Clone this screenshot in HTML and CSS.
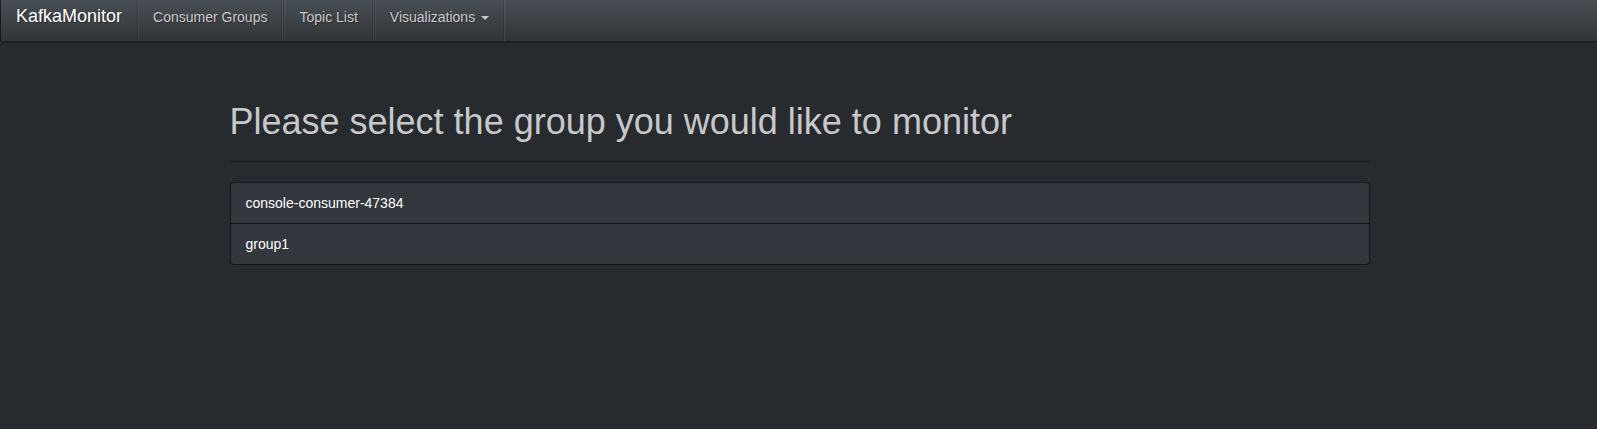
FILE: index.html
```html
<!DOCTYPE html>
<html lang="en">
<head>
<meta charset="utf-8">
<title>KafkaMonitor</title>
<link rel="stylesheet" href="styles.css">
</head>
<body>
<nav class="navbar">
  <a class="brand" href="#">KafkaMonitor</a>
  <ul class="nav">
    <li><a href="#">Consumer Groups</a></li>
    <li><a href="#">Topic List</a></li>
    <li><a href="#">Visualizations <span class="caret"></span></a></li>
  </ul>
</nav>
<main class="container">
  <div class="page-header">
    <h1>Please select the group you would like to monitor</h1>
  </div>
  <div class="list-group">
    <a class="list-item" href="#">console-consumer-47384</a>
    <a class="list-item" href="#">group1</a>
  </div>
</main>
</body>
</html>
```

FILE: styles.css
```css
* { box-sizing: border-box; }
html, body {
  margin: 0;
  padding: 0;
}
body {
  background: #272b30;
  color: #c8c8c8;
  font-family: "Liberation Sans", Arial, sans-serif;
  font-size: 14px;
  line-height: 20px;
}
a { text-decoration: none; }

.navbar {
  display: flex;
  align-items: flex-start;
  height: 42px;
  border-left: 1px solid rgba(0, 0, 0, 0.6);
  border-bottom: 1px solid rgba(0, 0, 0, 0.6);
  background-image: linear-gradient(#484e55, #3a3f44 60%, #313539);
  text-shadow: 1px 1px 1px rgba(0, 0, 0, 0.3);
  box-shadow: 0 3px 0 -2px rgba(0, 0, 0, 0.25);
}
.brand {
  display: block;
  height: 41px;
  padding: 6px 15px 0 15px;
  font-size: 18px;
  line-height: 20px;
  color: #fff;
}
.nav {
  display: flex;
  margin: 0;
  padding: 0;
  list-style: none;
}
.nav a {
  display: block;
  height: 41px;
  padding: 7px 15px 0 15px;
  color: #c8c8c8;
  border-left: 1px solid rgba(0, 0, 0, 0.2);
  border-right: 1px solid rgba(255, 255, 255, 0.08);
  box-shadow: inset 1px 0 0 rgba(255, 255, 255, 0.06), inset -1px 0 0 rgba(0, 0, 0, 0.15);
}
.caret {
  display: inline-block;
  width: 0;
  height: 0;
  margin-left: 2px;
  vertical-align: middle;
  border-top: 4px solid;
  border-left: 4px solid transparent;
  border-right: 4px solid transparent;
}

.container {
  width: 1170px;
  margin: 60px 0 0 calc(50% - 584px);
  padding: 0 15px;
}
.page-header {
  padding-bottom: 9px;
  border-bottom: 1px solid #1c1e22;
  margin-bottom: 20px;
}
.page-header h1 {
  margin: 0 0 10px;
  font-size: 36px;
  font-weight: normal;
  line-height: 1.1;
  color: #c8c8c8;
}
.list-group {
  display: flex;
  flex-direction: column;
}
.list-item {
  display: block;
  padding: 10px 15px;
  margin-bottom: -1px;
  background: #32383e;
  border: 1px solid rgba(0, 0, 0, 0.6);
  color: #fff;
}
.list-item:first-child { border-radius: 4px 4px 0 0; }
.list-item:last-child { border-radius: 0 0 4px 4px; margin-bottom: 0; }
```
